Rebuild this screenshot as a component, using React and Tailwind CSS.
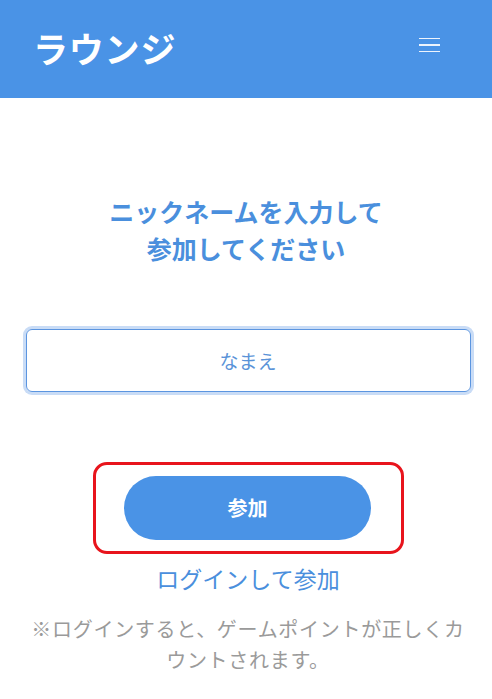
export default function App() {
  const font = { fontFamily: '"Noto Sans CJK JP", "Noto Sans", sans-serif' };
  return (
    <div className="w-[492px] h-[699px] bg-white overflow-hidden" style={font}>
      <header className="h-[98px] bg-[#4a93e6] flex items-center justify-between pl-[33px] pr-[52px]">
        <h1 className="text-white text-[35px] font-bold leading-none tracking-[0.8px] -mt-[4px]">ラウンジ</h1>
        <button className="flex flex-col gap-[5px] w-[21px] -mt-[8px]" aria-label="menu">
          <span className="block h-[1.5px] bg-white/90" />
          <span className="block h-[1.5px] bg-white/90" />
          <span className="block h-[1.5px] bg-white/90" />
        </button>
      </header>
      <main className="flex flex-col items-center">
        <h2 className="mt-[95px] text-center text-[25px] leading-[37px] font-bold text-[#4a8fdd]">
          ニックネームを入力して
          <br />
          参加してください
        </h2>
        <input
          className="mt-[62px] ml-[4px] w-[445px] h-[63px] rounded-[6px] border-[1.5px] border-[#5b95e0] ring-[3px] ring-[#c9dcf6] outline-none text-center text-[19px] text-[#4a8fdd] placeholder:text-[#5a93d8]"
          placeholder="なまえ"
        />
        <div className="mt-[70px] ml-[5px] w-[311px] h-[92px] rounded-[14px] border-[3px] border-[#e8141c] flex items-center justify-center pr-[2px]">
          <button className="w-[247px] h-[64px] rounded-full bg-[#4a93e6] text-white text-[20px] font-bold">
            参加
          </button>
        </div>
        <a className="mt-[11px] ml-[4px] text-[23px] leading-[26px] text-[#4a8fdd]">ログインして参加</a>
        <p className="mt-[22px] w-[444px] ml-[4px] text-center text-[20px] tracking-[0.7px] leading-[31px] text-[#9a9a9a]">
          ※ログインすると、ゲームポイントが正しくカウントされます。
        </p>
      </main>
    </div>
  );
}
